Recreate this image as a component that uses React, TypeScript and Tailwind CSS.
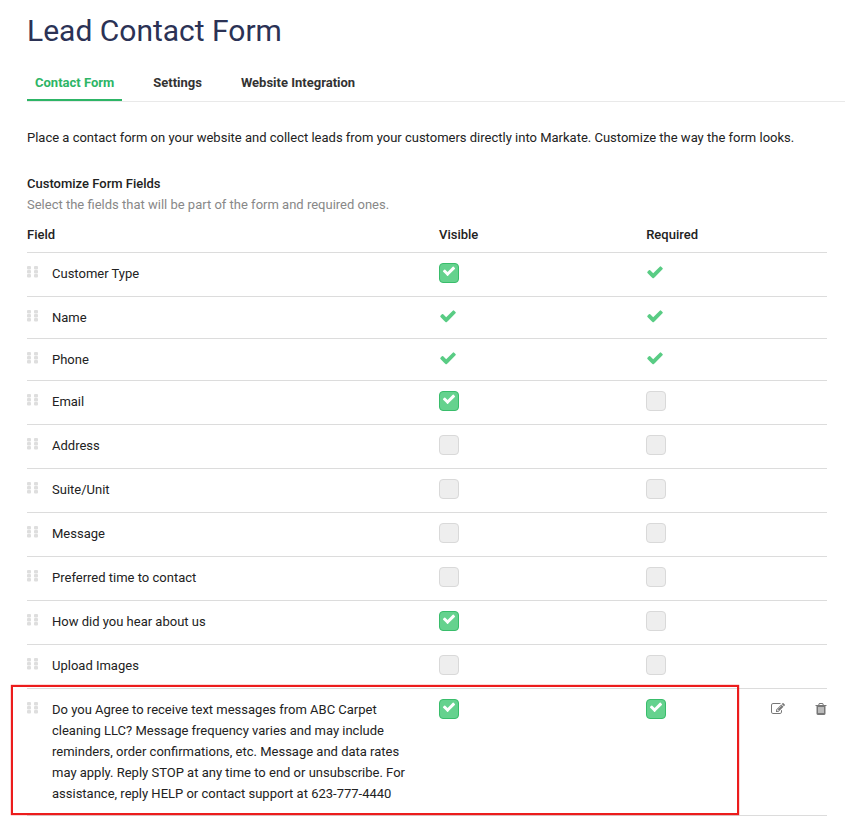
import { useState } from "react";

type Mark = "on" | "off" | "fixed";

interface FieldRow {
  label: string;
  visible: Mark;
  required: Mark;
  custom?: boolean;
}

const fields: FieldRow[] = [
  { label: "Customer Type", visible: "on", required: "fixed" },
  { label: "Name", visible: "fixed", required: "fixed" },
  { label: "Phone", visible: "fixed", required: "fixed" },
  { label: "Email", visible: "on", required: "off" },
  { label: "Address", visible: "off", required: "off" },
  { label: "Suite/Unit", visible: "off", required: "off" },
  { label: "Message", visible: "off", required: "off" },
  { label: "Preferred time to contact", visible: "off", required: "off" },
  { label: "How did you hear about us", visible: "on", required: "off" },
  { label: "Upload Images", visible: "off", required: "off" },
  {
    label:
      "Do you Agree to receive text messages from ABC Carpet cleaning LLC? Message frequency varies and may include reminders, order confirmations, etc. Message and data rates may apply. Reply STOP at any time to end or unsubscribe. For assistance, reply HELP or contact support at 623-777-4440",
    visible: "on",
    required: "on",
    custom: true,
  },
];

const tabs = ["Contact Form", "Settings", "Website Integration"];

function Check({ className }: { className: string }) {
  return (
    <svg viewBox="0 0 1792 1792" fill="currentColor" aria-hidden="true" className={className}>
      <path d="M1671 566q0 40-28 68l-724 724-136 136q-28 28-68 28t-68-28l-136-136-362-362q-28-28-28-68t28-68l136-136q28-28 68-28t68 28l294 295 656-657q28-28 68-28t68 28l136 136q28 28 28 68z" />
    </svg>
  );
}

function Grip() {
  return (
    <svg viewBox="0 0 11 12" aria-hidden="true" className="mt-[3px] h-3 w-[11px] shrink-0 fill-[#dedede]">
      {[0, 4, 8].map((y) => (
        <g key={y}>
          <rect x="0" y={y} width="4" height="3.6" rx="1" />
          <rect x="7" y={y} width="4" height="3.6" rx="1" />
        </g>
      ))}
    </svg>
  );
}

function MarkCell({ mark, label }: { mark: Mark; label: string }) {
  const [checked, setChecked] = useState(mark === "on");
  if (mark === "fixed") {
    return <Check className="size-[18px] text-[#59cc84]" />;
  }
  return (
    <label className="grid size-5 cursor-pointer">
      <input
        type="checkbox"
        aria-label={label}
        checked={checked}
        onChange={(e) => setChecked(e.target.checked)}
        className="peer col-start-1 row-start-1 size-5 cursor-pointer appearance-none rounded border border-[#d9d9d9] bg-[#eeeeee] checked:border-[#39bd6b] checked:bg-[#65d28e]"
      />
      <Check className="pointer-events-none invisible col-start-1 row-start-1 mt-px size-[14px] justify-self-center text-white peer-checked:visible" />
    </label>
  );
}

function Row({ field }: { field: FieldRow }) {
  const hasBox = field.visible !== "fixed" || field.required !== "fixed";
  return (
    <tr className={`relative border-b border-[#dcdcdc] align-top ${hasBox ? "h-11" : "h-[42px]"}`}>
      <td className={field.custom ? "pt-[10px] pb-[11px]" : "py-[10px]"}>
        {field.custom && (
          <span className="pointer-events-none absolute top-[-4px] right-[88px] bottom-0 left-[-16px] border-2 border-[#ec1c1c] shadow-[0_0_1px_#ec1c1c]" />
        )}
        <div className="flex gap-[14px] pr-6">
          <Grip />
          <span>{field.label}</span>
        </div>
      </td>
      <td className="pt-[10px]">
        <MarkCell mark={field.visible} label={`${field.label} visible`} />
      </td>
      <td className="pt-[10px]">
        <MarkCell mark={field.required} label={`${field.label} required`} />
      </td>
      <td className="pt-[13px]">
        {field.custom && (
          <div className="flex justify-end gap-[30px] text-[#777777]">
            <button type="button" aria-label="Edit field" className="cursor-pointer">
              <svg viewBox="0 0 1792 1792" fill="currentColor" className="size-[14px]">
                <path d="M888 1184l116-116-152-152-116 116v56h96v96h56zm440-720q-16-16-33 1l-350 350q-17 17-1 33t33-1l350-350q17-17 1-33zm80 594v190q0 119-84.5 203.5t-203.5 84.5h-832q-119 0-203.5-84.5t-84.5-203.5v-832q0-119 84.5-203.5t203.5-84.5h832q63 0 117 25 15 7 18 23 3 17-9 29l-49 49q-14 14-32 8-23-6-45-6h-832q-66 0-113 47t-47 113v832q0 66 47 113t113 47h832q66 0 113-47t47-113v-126q0-13 9-22l64-64q15-15 35-7t20 29zm-96-738l288 288-672 672h-288v-288zm444 132l-92 92-288-288 92-92q28-28 68-28t68 28l152 152q28 28 28 68t-28 68z" />
              </svg>
            </button>
            <button type="button" aria-label="Delete field" className="cursor-pointer">
              <svg viewBox="128 0 1536 1792" fill="currentColor" className="h-[14px] w-3">
                <path d="M704 1376v-704q0-14-9-23t-23-9h-64q-14 0-23 9t-9 23v704q0 14 9 23t23 9h64q14 0 23-9t9-23zm256 0v-704q0-14-9-23t-23-9h-64q-14 0-23 9t-9 23v704q0 14 9 23t23 9h64q14 0 23-9t9-23zm256 0v-704q0-14-9-23t-23-9h-64q-14 0-23 9t-9 23v704q0 14 9 23t23 9h64q14 0 23-9t9-23zm-544-992h448l-48-117q-7-9-17-11h-317q-10 2-17 11zm928 32v64q0 14-9 23t-23 9h-96v948q0 83-47 143.5t-113 60.5h-832q-66 0-113-58.5t-47-141.5v-952h-96q-14 0-23-9t-9-23v-64q0-14 9-23t23-9h309l70-167q15-37 54-63t79-26h320q40 0 79 26t54 63l70 167h309q14 0 23 9t9 23z" />
              </svg>
            </button>
          </div>
        )}
      </td>
    </tr>
  );
}

export default function App() {
  const [active, setActive] = useState(tabs[0]);
  return (
    <main className="bg-white pt-[9px] pl-[27px] font-[Roboto,sans-serif] text-[13px] leading-[21px] text-[#222222]">
      <h1 className="text-[30px] leading-11 text-[#2b3255]">Lead Contact Form</h1>

      <nav className="mt-[11px] flex gap-[23px] border-b border-[#e9e9e9]">
        {tabs.map((tab) => (
          <button
            key={tab}
            type="button"
            onClick={() => setActive(tab)}
            className={`cursor-pointer border-b-2 px-2 pt-2 pb-[6px] font-bold ${
              tab === active ? "border-[#2db566] text-[#2db566]" : "border-transparent text-[#333333]"
            }`}
          >
            {tab}
          </button>
        ))}
      </nav>

      <div className="pr-[18px]">
        <p className="mt-[25px]">
          Place a contact form on your website and collect leads from your customers directly into Markate. Customize
          the way the form looks.
        </p>
        <h2 className="mt-[25px] font-medium">Customize Form Fields</h2>
        <p className="text-[#888888]">Select the fields that will be part of the form and required ones.</p>

        <table className="w-full table-fixed border-collapse text-left">
          <colgroup>
            <col className="w-[51.5%]" />
            <col className="w-[25.9%]" />
            <col />
            <col className="w-[10%]" />
          </colgroup>
          <thead>
            <tr className="border-b border-[#dcdcdc] align-top">
              <th className="pt-[9px] pb-[7px] font-medium">Field</th>
              <th className="pt-[9px] pb-[7px] font-medium">Visible</th>
              <th className="pt-[9px] pb-[7px] font-medium">Required</th>
              <td />
            </tr>
          </thead>
          <tbody>
            {fields.map((field) => (
              <Row key={field.label} field={field} />
            ))}
          </tbody>
        </table>
      </div>
    </main>
  );
}
